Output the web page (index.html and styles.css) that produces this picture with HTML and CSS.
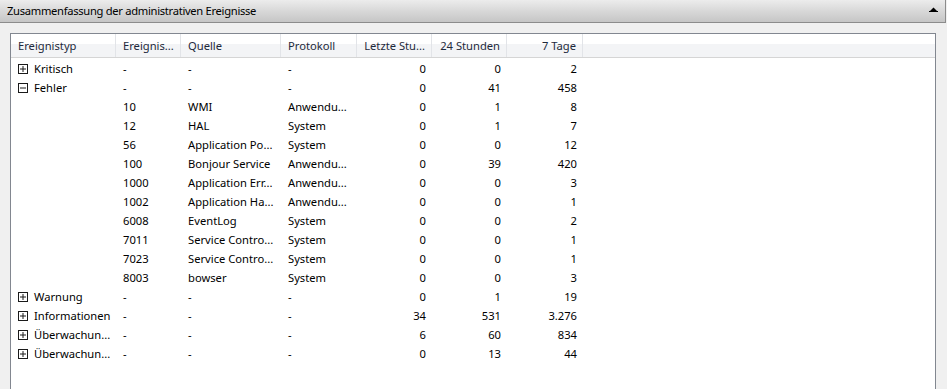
FILE: index.html
```html
<!DOCTYPE html>
<html lang="de">
<head>
<meta charset="utf-8">
<title>Zusammenfassung der administrativen Ereignisse</title>
<link rel="stylesheet" href="styles.css">
</head>
<body>
<div class="panel">
  <div class="titlebar">
    <span class="title">Zusammenfassung der administrativen Ereignisse</span>
    <svg class="collapse" width="9" height="6" viewBox="0 0 9 6"><path d="M4.5 0.5 L8 4 L1 4 Z" fill="#000"/><rect x="0" y="4" width="9" height="1" fill="#000"/></svg>
  </div>
  <div class="content">
    <div class="list">
      <div class="row head">
        <div class="c">Ereignistyp</div>
        <div class="c">Ereignis...</div>
        <div class="c">Quelle</div>
        <div class="c">Protokoll</div>
        <div class="c r">Letzte Stu...</div>
        <div class="c r">24 Stunden</div>
        <div class="c r">7 Tage</div>
        <div class="c fill"></div>
      </div>
      <div class="body">
        <div class="row"><div class="c t"><svg class="box" width="10" height="10" viewBox="0 0 10 10"><rect x="0.5" y="0.5" width="9" height="9" fill="#fff" stroke="#1a1a1a"/><path d="M2 5H8M5 2V8" stroke="#1a1a1a"/></svg>Kritisch</div><div class="c">-</div><div class="c">-</div><div class="c">-</div><div class="c r">0</div><div class="c r">0</div><div class="c r">2</div></div>
        <div class="row"><div class="c t"><svg class="box" width="10" height="10" viewBox="0 0 10 10"><rect x="0.5" y="0.5" width="9" height="9" fill="#fff" stroke="#1a1a1a"/><path d="M2 5H8" stroke="#1a1a1a"/></svg>Fehler</div><div class="c">-</div><div class="c">-</div><div class="c">-</div><div class="c r">0</div><div class="c r">41</div><div class="c r">458</div></div>
        <div class="row"><div class="c"></div><div class="c">10</div><div class="c">WMI</div><div class="c">Anwendu...</div><div class="c r">0</div><div class="c r">1</div><div class="c r">8</div></div>
        <div class="row"><div class="c"></div><div class="c">12</div><div class="c">HAL</div><div class="c">System</div><div class="c r">0</div><div class="c r">1</div><div class="c r">7</div></div>
        <div class="row"><div class="c"></div><div class="c">56</div><div class="c">Application Po...</div><div class="c">System</div><div class="c r">0</div><div class="c r">0</div><div class="c r">12</div></div>
        <div class="row"><div class="c"></div><div class="c">100</div><div class="c">Bonjour Service</div><div class="c">Anwendu...</div><div class="c r">0</div><div class="c r">39</div><div class="c r">420</div></div>
        <div class="row"><div class="c"></div><div class="c">1000</div><div class="c">Application Err...</div><div class="c">Anwendu...</div><div class="c r">0</div><div class="c r">0</div><div class="c r">3</div></div>
        <div class="row"><div class="c"></div><div class="c">1002</div><div class="c">Application Ha...</div><div class="c">Anwendu...</div><div class="c r">0</div><div class="c r">0</div><div class="c r">1</div></div>
        <div class="row"><div class="c"></div><div class="c">6008</div><div class="c">EventLog</div><div class="c">System</div><div class="c r">0</div><div class="c r">0</div><div class="c r">2</div></div>
        <div class="row"><div class="c"></div><div class="c">7011</div><div class="c">Service Contro...</div><div class="c">System</div><div class="c r">0</div><div class="c r">0</div><div class="c r">1</div></div>
        <div class="row"><div class="c"></div><div class="c">7023</div><div class="c">Service Contro...</div><div class="c">System</div><div class="c r">0</div><div class="c r">0</div><div class="c r">1</div></div>
        <div class="row"><div class="c"></div><div class="c">8003</div><div class="c">bowser</div><div class="c">System</div><div class="c r">0</div><div class="c r">0</div><div class="c r">3</div></div>
        <div class="row"><div class="c t"><svg class="box" width="10" height="10" viewBox="0 0 10 10"><rect x="0.5" y="0.5" width="9" height="9" fill="#fff" stroke="#1a1a1a"/><path d="M2 5H8M5 2V8" stroke="#1a1a1a"/></svg>Warnung</div><div class="c">-</div><div class="c">-</div><div class="c">-</div><div class="c r">0</div><div class="c r">1</div><div class="c r">19</div></div>
        <div class="row"><div class="c t"><svg class="box" width="10" height="10" viewBox="0 0 10 10"><rect x="0.5" y="0.5" width="9" height="9" fill="#fff" stroke="#1a1a1a"/><path d="M2 5H8M5 2V8" stroke="#1a1a1a"/></svg>Informationen</div><div class="c">-</div><div class="c">-</div><div class="c">-</div><div class="c r">34</div><div class="c r">531</div><div class="c r">3.276</div></div>
        <div class="row"><div class="c t"><svg class="box" width="10" height="10" viewBox="0 0 10 10"><rect x="0.5" y="0.5" width="9" height="9" fill="#fff" stroke="#1a1a1a"/><path d="M2 5H8M5 2V8" stroke="#1a1a1a"/></svg>Überwachun...</div><div class="c">-</div><div class="c">-</div><div class="c">-</div><div class="c r">6</div><div class="c r">60</div><div class="c r">834</div></div>
        <div class="row"><div class="c t"><svg class="box" width="10" height="10" viewBox="0 0 10 10"><rect x="0.5" y="0.5" width="9" height="9" fill="#fff" stroke="#1a1a1a"/><path d="M2 5H8M5 2V8" stroke="#1a1a1a"/></svg>Überwachun...</div><div class="c">-</div><div class="c">-</div><div class="c">-</div><div class="c r">0</div><div class="c r">13</div><div class="c r">44</div></div>
      </div>
    </div>
  </div>
</div>
</body>
</html>
```
FILE: styles.css
```css
html, body {
  margin: 0;
  padding: 0;
  background: #f0f0f0;
  overflow: hidden;
}
body {
  font-family: "Noto Sans", "Open Sans", sans-serif;
  font-size: 11.2px;
  color: #000;
  width: 947px;
  height: 389px;
}
.panel {
  width: 946px;
}
.titlebar {
  box-sizing: border-box;
  height: 23px;
  border-bottom: 1px solid #8c8c8c;
  border-right: 1px solid #8c8c8c;
  background: linear-gradient(#ececec, #d8d8d8 50%, #c6c6c6);
  display: flex;
  align-items: center;
  justify-content: space-between;
  padding: 0 7px;
}
.title {
  color: #000;
  line-height: 22px;
  letter-spacing: -0.3px;
}
.collapse {
  margin-top: -2px;
}
.content {
  padding: 10px 0 0 10px;
}
.list {
  box-sizing: border-box;
  width: 926px;
  height: 356px;
  background: #fff;
  border: 1px solid #828790;
  border-bottom: none;
  overflow: hidden;
}
.row {
  display: grid;
  grid-template-columns: 105px 65px 100px 76px 75px 75px 76px 1fr;
  height: 19px;
  align-items: center;
}
.head {
  height: 23px;
  background: linear-gradient(#ffffff 0, #ffffff 42%, #f3f4f6 43%, #f3f4f6 100%);
  border-bottom: 1px solid #d5d5d5;
  color: #1e2a3c;
  align-items: stretch;
}
.head .c {
  border-right: 1px solid #e2e4e8;
  display: flex;
  align-items: center;
  justify-content: flex-start;
}
.head .c.r {
  justify-content: flex-end;
}
.head .c.fill {
  border-right: none;
}
.body {
  padding-top: 1px;
}
.c {
  padding: 0 6px 0 7px;
  white-space: nowrap;
  overflow: hidden;
  line-height: 19px;
}
.c.r {
  text-align: right;
}
.c.t {
  display: flex;
  align-items: center;
}
.box {
  flex: none;
  margin-right: 6px;
}
```
